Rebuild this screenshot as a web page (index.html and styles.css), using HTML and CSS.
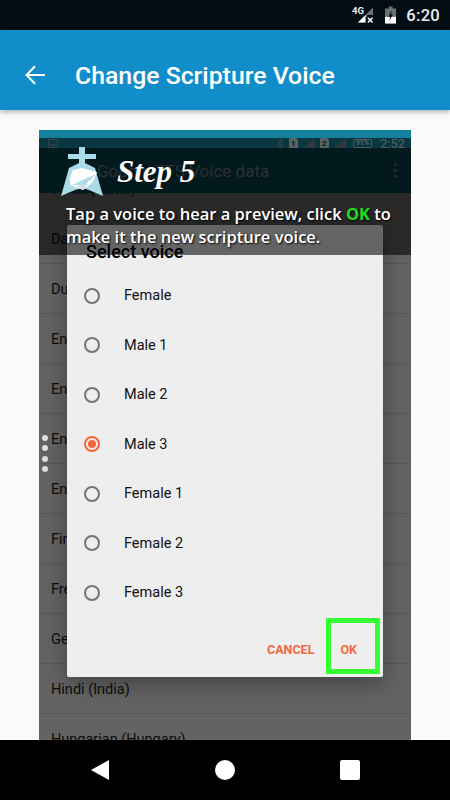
FILE: index.html
```html
<!DOCTYPE html>
<html lang="en">
<head>
  <meta charset="UTF-8">
  <meta name="viewport" content="width=device-width, initial-scale=1.0">
  <title>Change Scripture Voice</title>
  <link rel="stylesheet" href="styles.css">
</head>

<body>
  <div class="status-bar">
    <span class="net-label">4G</span>
    <svg class="signal" width="18" height="18" viewBox="0 0 18 18">
      <path d="M17 1V9H11V11H9V17H1Z" fill="#6b7074"/>
      <path d="M9 9V17H1Z" fill="#fff"/>
      <path d="M11.500 12L16.500 17M16.500 12L11.500 17" stroke="#fff" stroke-width="1.600"/>
    </svg>
    <svg class="battery" width="12" height="18" viewBox="0 0 12 18">
      <path d="M4 0H8V2H12V18H0V2H4Z" fill="#6b7074"/>
      <path d="M0 11H12V18H0Z" fill="#fff"/>
      <path d="M7 4L3.500 11H5.500L4.500 15L8.500 8.500H6.500Z" fill="#020d14"/>
    </svg>
    <span class="clock">6:20</span>
  </div>

  <header class="app-bar">
    <svg class="back" width="20" height="20" viewBox="0 0 20 20">
      <path d="M20 10H2M10 1.200L1.500 10L10 18.800" fill="none" stroke="#fff" stroke-width="2"/>
    </svg>
    <h1>Change Scripture Voice</h1>
  </header>

  <main class="content">
    <div class="shot">
      <div class="shot-status">
        <svg class="thumb" width="10" height="9" viewBox="0 0 10 9">
          <rect x="0.500" y="0.500" width="9" height="8" fill="none" stroke="#7fa3aa"/>
          <path d="M2 7L4 4.500L5.500 6L7 5L8 7Z" fill="#7fa3aa"/>
        </svg>
        <div class="shot-icons">
          <svg width="8" height="11" viewBox="0 0 8 11">
            <path d="M1 3L7 8L4 10.500V.5L7 3L1 8" fill="none" stroke="#8fa9ad" stroke-width="1"/>
          </svg>
          <span class="sim">1</span>
          <svg width="12" height="10" viewBox="0 0 12 10"><path d="M12 0V10H0Z" fill="#6f8e94"/></svg>
          <span class="sim">2</span>
          <svg width="12" height="10" viewBox="0 0 12 10"><path d="M12 0V10H0Z" fill="#6f8e94"/></svg>
          <span class="shot-battery">91%</span>
          <span class="shot-clock">2:52</span>
        </div>
      </div>
      <div class="shot-toolbar">
        <span>Google TTS Voice data</span>
        <div class="shot-more"><i></i><i></i><i></i></div>
      </div>

      <ul class="lang-list">
        <li>Tamil (Tamil)</li>
        <li>Danish (Denmark)</li>
        <li>Dutch (Netherlands)</li>
        <li>English (Australia)</li>
        <li>English (India)</li>
        <li>English (UK)</li>
        <li>English (US)</li>
        <li>Finnish (Finland)</li>
        <li>French (France)</li>
        <li>German (Germany)</li>
        <li>Hindi (India)</li>
        <li>Hungarian (Hungary)</li>
      </ul>

      <div class="dialog">
        <h2>Select voice</h2>
        <div class="voice"><span class="radio"></span>Female</div>
        <div class="voice"><span class="radio"></span>Male 1</div>
        <div class="voice"><span class="radio"></span>Male 2</div>
        <div class="voice"><span class="radio checked"></span>Male 3</div>
        <div class="voice"><span class="radio"></span>Female 1</div>
        <div class="voice"><span class="radio"></span>Female 2</div>
        <div class="voice"><span class="radio"></span>Female 3</div>
        <div class="dialog-actions">
          <span>CANCEL</span>
          <span>OK</span>
        </div>
        <div class="highlight"></div>
      </div>

      <div class="side-dots"><i></i><i></i><i></i><i></i></div>

      <div class="step-banner">
        <div class="step-head">
          <svg class="step-logo" width="50" height="54" viewBox="0 0 50 54">
            <path d="M21 3H27V10H38V15H27V19L37 24L45 52L31 46L25 44L17 46L3 52L11 24L21 19V15H10V10H21Z" fill="#a9dbe9"/>
            <path d="M15 26L24 24L39 28L35 38L25 46L12 41L12 33Z" fill="#fff"/>
            <path d="M14 41L38 30L27 41Z" fill="#a9dbe9"/>
            <path d="M18 42L30 40L25 46Z" fill="#d5dde0"/>
          </svg>
          <span class="step-title">Step 5</span>
        </div>
        <p class="step-text">Tap a voice to hear a preview, click <b>OK</b> to make it the new scripture voice.</p>
      </div>
    </div>
  </main>

  <nav class="nav-bar">
    <span class="nav-back"></span>
    <span class="nav-home"></span>
    <span class="nav-recent"></span>
  </nav>
</body>
</html>
```

FILE: styles.css
```css
* {
  box-sizing: border-box;
}

body {
  font-family: "Roboto", sans-serif;
  margin: 0;
  width: 450px;
  height: 800px;
  overflow: hidden;
  display: flex;
  flex-direction: column;
  background-color: #fafafa;
}

.status-bar {
  height: 30px;
  flex: none;
  background: #020d14;
  color: #eee;
  display: flex;
  align-items: center;
  padding: 0 10px 0 352px;
}

.net-label {
  font-size: 9.500px;
  font-weight: 700;
  width: 5px;
  margin-top: -10px;
  white-space: nowrap;
}

.battery {
  margin-left: 11px;
}

.clock {
  margin-left: 10px;
  font-size: 16.500px;
  font-weight: 500;
  letter-spacing: 0.3px;
}

.app-bar {
  height: 80px;
  flex: none;
  background: #118ec9;
  color: white;
  display: flex;
  align-items: center;
  padding: 10px 0 0 25px;
  box-shadow: 0 2px 5px rgba(0,0,0,0.3);
  position: relative;
  z-index: 1;
}

.app-bar h1 {
  margin: 0 0 0 30px;
  font-size: 24.800px;
  font-weight: 500;
}

.content {
  flex: 1;
  min-height: 0;
  padding: 20px 39px 0;
}

.shot {
  position: relative;
  height: 100%;
  overflow: hidden;
  background: #636363;
}

.shot-status {
  height: 18px;
  background: #13819b;
  display: flex;
  align-items: center;
  justify-content: space-between;
  padding: 8px 6px 0 9px;
}

.thumb {
  display: block;
}

.shot-icons {
  display: flex;
  align-items: center;
  gap: 5px;
  color: #d5e6e9;
}

.sim {
  width: 9px;
  height: 11px;
  background: #d5e6e9;
  color: #0d3c46;
  font-size: 8px;
  font-weight: 700;
  text-align: center;
  line-height: 11px;
  border-radius: 1px 3px 0 0;
}

.shot-battery {
  border: 1px solid #b9d3d8;
  border-radius: 2px;
  font-size: 7px;
  font-weight: 700;
  line-height: 7px;
  padding: 0 2px;
  margin-left: 2px;
}

.shot-clock {
  font-size: 13px;
  margin-left: 3px;
}

.shot-toolbar {
  height: 45px;
  background: #053e47;
  color: #6a7072;
  font-size: 17px;
  display: flex;
  align-items: center;
  justify-content: space-between;
  padding: 0 14px 0 58px;
  position: relative;
  z-index: 1;
}

.shot-more {
  display: flex;
  flex-direction: column;
  gap: 3px;
}

.shot-more i {
  display: block;
  width: 3px;
  height: 3px;
  border-radius: 50%;
  background: #6a7072;
}

.lang-list {
  list-style: none;
  margin: -29px 0 0;
  padding: 0;
}

.lang-list li {
  height: 50px;
  padding: 2px 0 0 12px;
  display: flex;
  align-items: center;
  font-size: 14.500px;
  color: #0c0c0c;
  border-bottom: 1px solid #585858;
}

.dialog {
  position: absolute;
  left: 28px;
  top: 95px;
  width: 316px;
  background: #eee;
  border-radius: 2px;
  box-shadow: 0 6px 22px rgba(0,0,0,0.35);
  color: #111;
  z-index: 2;
}

.dialog h2 {
  margin: 0;
  height: 46px;
  padding: 17px 0 0 19px;
  font-size: 18px;
  line-height: 20px;
  font-weight: 500;
  color: #000;
}

.voice {
  height: 49.500px;
  display: flex;
  align-items: center;
  padding-left: 17px;
  font-size: 14.500px;
}

.radio {
  width: 16px;
  height: 16px;
  border: 2px solid #757575;
  border-radius: 50%;
  margin-right: 24px;
  padding: 2px;
}

.radio.checked {
  border-color: #f2683c;
}

.radio.checked::after {
  content: "";
  display: block;
  width: 8px;
  height: 8px;
  border-radius: 50%;
  background: #f2683c;
}

.dialog-actions {
  height: 59px;
  display: flex;
  justify-content: flex-end;
  align-items: center;
  gap: 26px;
  padding: 5px 26px 0 0;
  font-size: 12.500px;
  font-weight: 700;
  color: #f2683c;
}

.highlight {
  position: absolute;
  left: 259px;
  bottom: 3px;
  width: 54px;
  height: 56px;
  border: 5px solid #33ff33;
}

.side-dots {
  position: absolute;
  left: 3px;
  top: 305px;
  z-index: 3;
  display: flex;
  flex-direction: column;
  gap: 4.300px;
}

.side-dots i {
  display: block;
  width: 6px;
  height: 6px;
  border-radius: 50%;
  background: #ddd;
}

.step-banner {
  position: absolute;
  left: 0;
  right: 0;
  top: 8px;
  height: 117px;
  z-index: 3;
  background: rgba(0,0,0,0.58);
}

.step-head {
  display: flex;
  align-items: flex-start;
  height: 60px;
  padding-left: 19px;
}

.step-logo {
  margin-top: 6px;
  flex: none;
}

.step-title {
  margin: 16px 0 0 9px;
  font-family: "Liberation Serif", serif;
  font-style: italic;
  font-weight: 700;
  font-size: 31px;
  line-height: 36px;
  color: white;
  text-shadow: 0 0 2px #000;
}

.step-text {
  margin: 4px 0 0;
  padding: 0 16px 0 27px;
  font-family: "Open Sans", sans-serif;
  font-size: 16.500px;
  font-weight: 600;
  line-height: 23px;
  color: white;
  text-shadow: 1px 1px 2px #000;
}

.step-text b {
  color: #1be01b;
  font-weight: 700;
}

.nav-bar {
  height: 60px;
  flex: none;
  background: #000;
  position: relative;
  z-index: 1;
  display: grid;
  grid-template-columns: 200px 50px 200px;
  align-items: center;
}

.nav-back {
  justify-self: start;
  margin-left: 91px;
  width: 0;
  height: 0;
  border-top: 10px solid transparent;
  border-bottom: 10px solid transparent;
  border-right: 18px solid white;
}

.nav-home {
  justify-self: center;
  width: 20px;
  height: 20px;
  border-radius: 50%;
  background: white;
}

.nav-recent {
  justify-self: start;
  margin-left: 90px;
  width: 20px;
  height: 20px;
  border-radius: 2px;
  background: white;
}
```
